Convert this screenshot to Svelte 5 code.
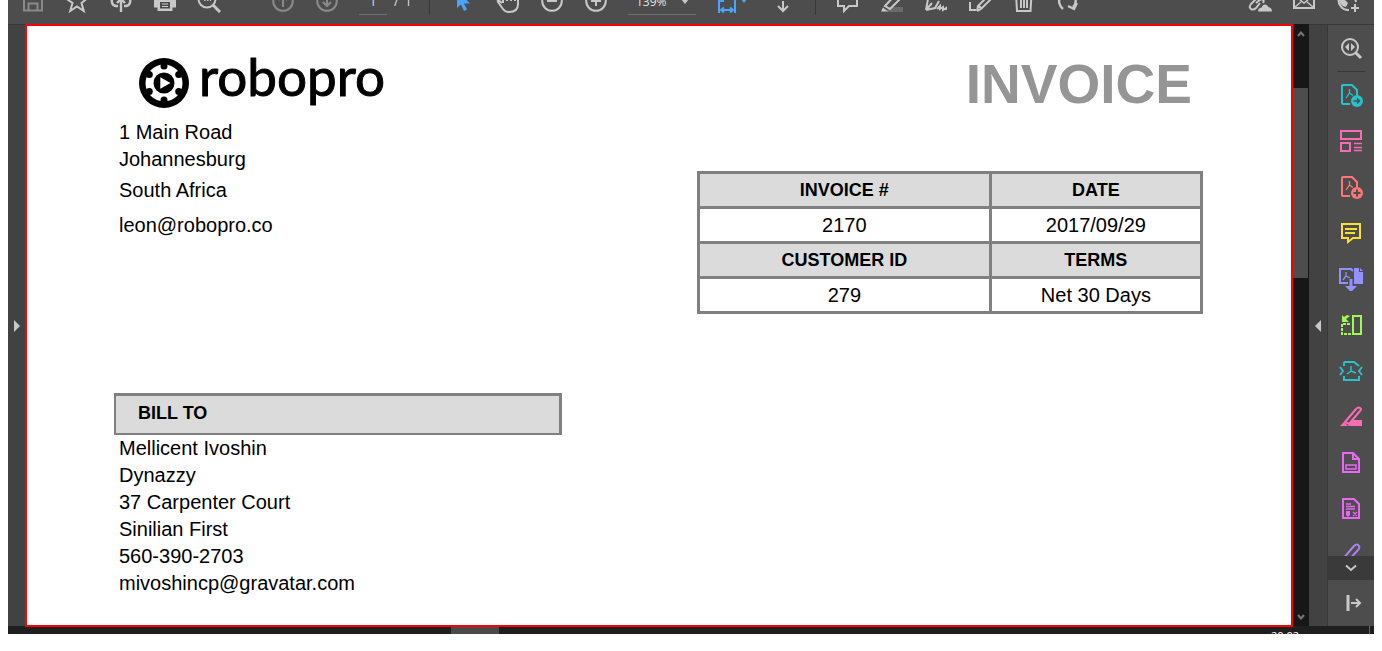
<script>
  const fileTools = [
    { label: 'Save', dim: true, d: 'M3 0V21.500H21V0M7.500 22V14.500H16.500V22' },
    { label: 'Star', d: 'M12 1L15 9L22 9.500L16.500 14L18.800 22L12 17.500L5.200 22L7.500 14L1 9.500L9 9Z' },
    { label: 'Share', w: 2.4, d: 'M9 17H6.500A5 5 0 0 1 5 8A7 7 0 0 1 19 8A5 5 0 0 1 17.500 17H15M12 23V10M8 14L12 10L16 14' }
  ];

  const commentTools = [
    { label: 'Comment', d: 'M2 3V17H8V22L13 17H21V3' },
    { label: 'Highlight', kind: 'marker' },
    { label: 'Sign', d: 'M2 21L4 10L10 5M2 21L11 19L15 12M2 21L8 14M13 20L16 17L16 20L19 18L19 21L22 19V21' },
    { label: 'Edit', d: 'M2 13V21H8M9 22L10 17L20 7L23 10L13 20L9 22M11 17L14 20' },
    { label: 'Delete', d: 'M4 5L5 22H18.500L19.500 5M9 8V19M12 8V19M15 8V19M2 5H22' },
    { label: 'Rotate', w: 2.4, d: 'M7 20A10 10 0 0 1 4 8M17 5A9 9 0 0 1 17 18M12 17L18 20L21 14' }
  ];

  const sideTools = [
    { label: 'Export PDF', color: '#26c3c9', kind: 'export' },
    { label: 'Organize pages', color: '#f76cb5', kind: 'organize' },
    { label: 'Create PDF', color: '#ff7679', kind: 'create' },
    { label: 'Comment', color: '#ffde32', kind: 'comment' },
    { label: 'Combine files', color: '#9191ff', kind: 'combine' },
    { label: 'Compare', color: '#a0f858', kind: 'compare' },
    { label: 'Compress PDF', color: '#26c3c9', kind: 'compress' },
    { label: 'Redact', color: '#f76cb5', kind: 'redact' },
    { label: 'Stamp', color: '#e768f5', kind: 'stamp' },
    { label: 'Prepare form', color: '#e768f5', kind: 'form' },
    { label: 'More tools', color: '#ae81f0', kind: 'sign' }
  ];

  const billTo = ['Mellicent Ivoshin', 'Dynazzy', '37 Carpenter Court', 'Sinilian First', '560-390-2703', 'mivoshincp@gravatar.com'];
  const notches = [30, 90, 150, 210, 270, 330].map((a) => a * Math.PI / 180);
</script>

{#snippet lineIcon(t)}
  <button class="tool" class:dim={t.dim} aria-label={t.label}>
    {#if t.kind === 'marker'}
      <svg viewBox="0 0 24 24"><path d="M9 18H23V23H6Z" fill="#6b6b6b" /><path d="M1 22.500L3 18.500L8 22.500Z" fill="currentColor" /><path d="M5 17L17 4L22 8L10 20Z" class="ln" /></svg>
    {:else}
      <svg viewBox="0 0 24 24"><path d={t.d} class="ln" style:stroke-width={t.w ?? 2} /></svg>
    {/if}
  </button>
{/snippet}

<div class="shell">
  <header>
    <div class="bar">
      {#each fileTools as t}{@render lineIcon(t)}{/each}
      <button class="tool" aria-label="Print">
        <svg viewBox="0 0 24 24"><path d="M1 6H23V18.500H19.500V22H4.500V18.500H1Z" fill="#c8c8c8" /><path d="M7 13H17V19.500H7Z" fill="#4d4d4d" /><path d="M9 15H15M9 17.500H15" stroke="#c8c8c8" /></svg>
      </button>
      <button class="tool" aria-label="Find">
        <svg viewBox="0 0 24 24"><circle cx="10" cy="10" r="8.500" class="ln" /><path d="M16 16L23 23" class="ln" stroke-width="3" /><path d="M7 11H8.500M10 11H11.500M13 11H14" class="ln" /></svg>
      </button>
      <span class="gap"></span>
      <button class="tool dim" aria-label="Previous page">
        <svg viewBox="0 0 24 24"><circle cx="12" cy="12" r="9.800" class="ln" /><path d="M12 18V7M8 11L12 7L16 11" class="ln" /></svg>
      </button>
      <button class="tool dim" aria-label="Next page">
        <svg viewBox="0 0 24 24"><circle cx="12" cy="12" r="9.800" class="ln" /><path d="M12 6V17M8 13L12 17L16 13" class="ln" /></svg>
      </button>
      <input class="field page" aria-label="Page" value="1" />
      <span class="total">/ &nbsp;1</span>
      <span class="sep"></span>
      <button class="tool blue" aria-label="Select">
        <svg viewBox="0 0 24 24"><path d="M5 1V19L9 15.500L12 22L15 20.500L12 14.500H18Z" fill="currentColor" /></svg>
      </button>
      <button class="tool" aria-label="Pan">
        <svg viewBox="0 0 24 24"><path d="M6 14L3 11.500Q1 11 2 13L7 20Q9 23 13 23Q22 23 22 15V6M7 14V4M11 12V3M15 12V3M19 12V5" class="ln" /></svg>
      </button>
      <button class="tool" aria-label="Zoom out">
        <svg viewBox="0 0 24 24"><circle cx="12" cy="12" r="9.800" class="ln" /><path d="M7 12H17" class="ln" /></svg>
      </button>
      <button class="tool" aria-label="Zoom in">
        <svg viewBox="0 0 24 24"><circle cx="12" cy="12" r="9.800" class="ln" /><path d="M7 12H17M12 7V17" class="ln" /></svg>
      </button>
      <span class="zoom">
        <select class="field" aria-label="Zoom level"><option>139%</option></select>
        <svg viewBox="0 0 8 24"><path d="M0 10H8L4 15Z" fill="#c8c8c8" /></svg>
      </span>
      <button class="tool blue fit" aria-label="Fit width">
        <svg viewBox="0 0 24 24"><path d="M4 24V4H14L20 11V24M4 12H9M14 10H20M6 21H18M9 18.500L6 21L9 23.500M15 18.500L18 21L15 23.500" class="ln" /></svg>
        <svg class="caret" viewBox="0 0 6 24"><path d="M0 10H6L3 14Z" fill="currentColor" /></svg>
      </button>
      <button class="tool" aria-label="Scroll down">
        <svg viewBox="0 0 24 24"><path d="M12 12V22M7 17L12 22L17 17" class="ln" /></svg>
      </button>
      <span class="sep late"></span>
      {#each commentTools as t}{@render lineIcon(t)}{/each}
      <div class="right">
        <button class="tool" aria-label="Share link">
          <svg viewBox="0 0 24 24"><path d="M9 9L3 15Q0 19 4 20.500Q6 21 8 19L12 14M8 14L13 10Q17 11 15 14" class="ln" /><path d="M10 22.500Q10 19 13.500 18.500Q15 14 19 16Q20 18 21.500 18.500Q24 19 24 22.500Z" fill="currentColor" /></svg>
        </button>
        <button class="tool" aria-label="Email">
          <svg viewBox="0 0 24 24"><path d="M2 5V19H22V5" class="ln" /><path d="M3 18L9 13M21 18L15 13M2 6L12 14L22 6" class="ln" stroke-width="1.500" /></svg>
        </button>
        <button class="tool" aria-label="Add person">
          <svg viewBox="0 0 24 24"><path d="M3 8A10 10 0 0 0 13 21M19 8L20 13" class="ln" /><path d="M5 10L9 11L12 14L10 18Q4 17 3 11Z" fill="currentColor" /><path d="M15 19H23M19 15V23" class="ln" /></svg>
        </button>
      </div>
    </div>
  </header>

  <div class="work">
    <button class="strip left" aria-label="Show navigation"><svg viewBox="0 0 6 12"><path d="M0 0L6 6L0 12Z" fill="#c8c8c8" /></svg></button>
    <main>
      <section class="from">
        <div class="logo">
          <svg viewBox="-25 -25 50 50" aria-hidden="true">
            <circle r="25" /><circle r="18.500" fill="#fff" />
            {#each notches as a}<circle cx={17 * Math.cos(a)} cy={17 * Math.sin(a)} r="3.500" />{/each}
            <circle r="10.500" /><path d="M-3.700 -5.700L6.500 0L-3.700 5.700Z" fill="#fff" />
          </svg>
          <span>robopro</span>
        </div>
        <address>
          <p>1 Main Road</p>
          <p>Johannesburg</p>
          <p class="country">South Africa</p>
          <p class="mail">leon@robopro.co</p>
        </address>
        <h2>BILL TO</h2>
        {#each billTo as line}<p>{line}</p>{/each}
      </section>
      <section class="meta">
        <h1>INVOICE</h1>
        <table>
          <tbody>
            <tr><th class="wide">INVOICE #</th><th>DATE</th></tr>
            <tr><td>2170</td><td>2017/09/29</td></tr>
            <tr><th>CUSTOMER ID</th><th>TERMS</th></tr>
            <tr><td>279</td><td>Net 30 Days</td></tr>
          </tbody>
        </table>
      </section>
    </main>
    <div class="scroll">
      <button aria-label="Scroll up"><svg viewBox="0 0 8 6"><path d="M1 5L4 1.500L7 5" class="ln" /></svg></button>
      <div class="track"><div class="thumb"></div></div>
      <button aria-label="Scroll page down"><svg viewBox="0 0 8 6"><path d="M1 1L4 4.500L7 1" class="ln" /></svg></button>
    </div>
    <button class="strip" aria-label="Hide tools"><svg viewBox="0 0 6 12"><path d="M6 0L0 6L6 12Z" fill="#c8c8c8" /></svg></button>
    <aside>
      <button class="side" aria-label="Search tools">
        <svg viewBox="0 0 24 24"><circle cx="11" cy="11" r="8" class="ln" /><path d="M16.500 16.500L22 22" class="ln" stroke-width="3" /><path d="M10 7V15L6 11ZM12 7V15L16 11Z" fill="currentColor" /></svg>
      </button>
      <div class="list">
        {#each sideTools as t}
          <button class="side" aria-label={t.label} style:color={t.color}>
            <svg viewBox="0 0 24 24">
              {#if t.kind === 'export' || t.kind === 'create'}
                <path d="M11 21H4Q3 21 3 20V3Q3 2 4 2H13L18 7V12" class="ln" />
                <path d="M10.500 6V10L7 15M10.500 10L14 12.500" class="thin" />
                <circle cx="18" cy="18" r="6" fill="currentColor" />
                {#if t.kind === 'export'}<path d="M14.500 18H20.500M18 15.500L20.500 18L18 20.500" stroke="#4d4d4d" stroke-width="1.500" fill="none" />
                {:else}<path d="M14.500 18H21.500M18 14.500V21.500" stroke="#4d4d4d" stroke-width="2" />{/if}
              {:else if t.kind === 'organize'}
                <path d="M2 2H22V10H2ZM2 14H11V22H2Z" class="ln" /><path d="M15 14.500H23M15 18.500H23M15 21.500H23" class="thin" />
              {:else if t.kind === 'comment'}
                <path d="M3 3H21V17H14L9 21V17H3Z" class="ln" /><path d="M6 8H18M6 12H16" class="ln" />
              {:else if t.kind === 'combine'}
                <path d="M9 16H1V2H12L14 4" class="ln" /><path d="M7 5V9L4 13M7 9L11 11" class="thin" /><path d="M15 1H20V5H24V17H15Z" fill="currentColor" /><path d="M21 1L24 4H21ZM10.500 12H13.500V19H18L12 25L6 19H10.500Z" fill="currentColor" />
              {:else if t.kind === 'compare'}
                <path d="M14 3H22V21H14Z" class="ln" /><path d="M3 11V21H12M11 11H3" class="ln" stroke-dasharray="3 1" /><path d="M3 2L5 4L8 2L11 3L7 6L10 9H3Z" fill="currentColor" />
              {:else if t.kind === 'compress'}
                <path d="M5 7V4Q5 3 6 3H15L20 7M5 17V21H20V17M1 8L4 12L1 16M23 8L20 12L23 16" class="ln" /><path d="M12 7V12L8 15M12 12L17 14" class="ln" stroke-width="1.500" />
              {:else if t.kind === 'redact'}
                <path d="M6 17L17 4Q20 1 22 4Q22 5 21 6L10 19Z" class="ln" /><path d="M14 15H23V21H9ZM5 17L9 21H1Z" fill="currentColor" />
              {:else if t.kind === 'stamp'}
                <path d="M4 2H14L20 8V21H4ZM14 2V8H20" class="ln" /><path d="M7 14H17V18H7Z" class="ln" stroke-width="1.500" />
              {:else if t.kind === 'form'}
                <path d="M4 2H15L20 7V21H4Z" class="ln" /><path d="M7 7H12M7 9.500H16M7 12H16M14 15L18 19M18 15L14 19" class="thin" /><path d="M7 14H11V18L9 20L7 18Z" fill="currentColor" />
              {:else}
                <path d="M3 17L15 3Q18 0 20 3Q21 5 19 7L8 19" class="ln" />
              {/if}
            </svg>
          </button>
        {/each}
      </div>
      <button class="more" aria-label="Show more tools"><svg viewBox="0 0 12 8"><path d="M1 1.500L6 6L11 1.500" class="ln" /></svg></button>
      <button class="side" aria-label="Collapse pane">
        <svg viewBox="0 0 24 24"><path d="M9 4V20" class="ln" stroke-width="3" /><path d="M12 12H21M17 8L21 12L17 16" class="ln" /></svg>
      </button>
    </aside>
  </div>
  <footer><span class="app"></span><span class="clock">20:02</span><span class="edge"></span></footer>
</div>

<style>
  :global(body) { background: #fff; }
  .shell { display: flex; flex-direction: column; height: calc(100vh - 17px); margin: 0 8px; font-family: "Liberation Sans", Arial, sans-serif; color: #000; }
  button { border: 0; padding: 0; background: none; color: #c8c8c8; display: flex; align-items: center; justify-content: center; flex: none; }
  svg { display: block; flex: none; }
  .ln { fill: none; stroke: currentColor; stroke-width: 2; }
  .ln[stroke-width="3"] { stroke-width: 3; }
  .ln[stroke-width="1.500"] { stroke-width: 1.5; }
  .thin { fill: none; stroke: currentColor; stroke-width: 1.3; }

  header { flex: none; height: 24px; background: #4d4d4d; overflow: hidden; }
  .bar { display: flex; align-items: flex-start; margin-top: -11px; padding: 0 4px 0 3px; font: 12px "Open Sans", sans-serif; color: #e0e0e0; }
  .tool { width: 44px; height: 24px; }
  .tool svg { width: 24px; height: 24px; }
  .dim { color: #8a8a8a; }
  .blue { color: #4ba3fb; }
  .gap { width: 30px; }
  .field { box-sizing: border-box; height: 26px; border: 0; border-bottom: 1px solid #6e6e6e; padding: 0; background: none; color: inherit; font: inherit; border-radius: 0; appearance: none; }
  .page { width: 28px; margin-left: 10px; text-align: center; }
  .total { width: 42px; padding-left: 7px; line-height: 25px; box-sizing: border-box; }
  .sep { width: 1px; height: 26px; margin-right: 12px; background: #383838; }
  .late { margin: 0 10px; }
  .zoom { display: flex; margin: 0 10px; }
  .zoom .field { width: 68px; padding-left: 8px; }
  .zoom svg { width: 8px; height: 24px; margin-left: -15px; margin-right: 7px; }
  .fit { margin: 0 8px 0 3px; }
  .fit .caret { width: 6px; margin-left: 2px; }
  .right { display: flex; margin-left: auto; }

  .work { display: flex; flex: 1; min-height: 0; }
  .strip { width: 18px; background: #424242; border-top: 1px solid #383838; }
  .strip svg { width: 6px; height: 12px; }
  .left { width: 17px; }
  main { position: relative; flex: 1; display: grid; grid-template-columns: minmax(0, 448fr) minmax(0, 506fr); column-gap: 135px; align-items: start; margin-bottom: -1px; padding: 0 88px 0 87px; border: 2px solid #f00; background: #fff; font-size: 20px; line-height: 27px; }
  p { margin: 0; padding-left: 5px; }
  .from { padding-top: 32px; }
  .logo { display: flex; align-items: flex-start; gap: 10px; margin: 0 0 11px 25px; font: 53px/36px Lato, sans-serif; -webkit-text-stroke: 1px #000; }
  .logo svg { width: 50px; height: 50px; }
  .logo span { height: 36px; }
  address { font-style: normal; }
  .country { margin-top: 4px; }
  .mail { margin-top: 8px; }
  h2 { margin: 154px 0 0; padding: 4px 22px 6px; border: 3px solid #808080; border-width: 3px 3px 2px 2px; background: #dbdbdb; font-size: 18px; line-height: 27px; }
  .meta { padding-top: 26px; }
  h1 { margin: 0 11px 55px 0; text-align: right; font-size: 55px; line-height: 64px; color: #959595; }
  table { width: 100%; border-collapse: collapse; text-align: center; }
  th, td { box-sizing: border-box; height: 35px; padding: 0; border: 3px solid #808080; }
  th { background: #dbdbdb; font-size: 18px; }
  .wide { width: 58%; }

  .scroll { display: flex; flex-direction: column; box-sizing: border-box; width: 16px; padding: 1px 1px 0 0; background: #171717; }
  .scroll button { height: 18px; color: #777; }
  .scroll svg { width: 8px; height: 6px; }
  .track { flex: 1; display: flex; flex-direction: column; padding-top: 45px; }
  .track::after { content: ""; flex: 33; }
  .thumb { flex: 19; background: #4d4d4d; }

  aside { display: flex; flex-direction: column; box-sizing: border-box; width: 47px; background: #4d4d4d; border: 1px solid #383838; border-width: 1px 0 0 1px; }
  .side { width: 46px; height: 46px; }
  .side svg { width: 24px; height: 24px; }
  .list { flex: 1; min-height: 0; overflow: hidden; }
  .list::before { content: ""; display: block; height: 1px; margin: 0 9px; background: #383838; }
  .more { height: 24px; background: #3a3a3a; }
  .more svg { width: 12px; height: 8px; }

  footer { display: flex; height: 8px; flex: none; overflow: hidden; background: #1f1f1f; color: #fff; font: 11px/16px "Open Sans", sans-serif; }
  .app { width: 48px; margin-left: 443px; background: #4a4a4a; }
  .clock { margin: 2px 70px 0 auto; }
  .edge { width: 1px; margin-right: 4px; background: #666; }
</style>
